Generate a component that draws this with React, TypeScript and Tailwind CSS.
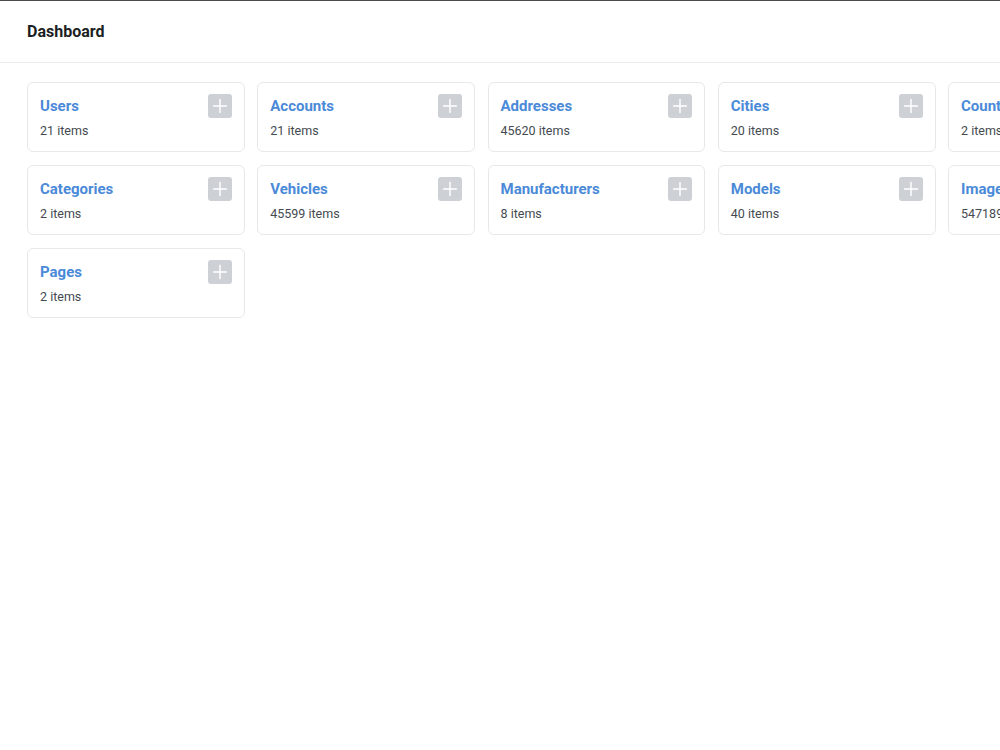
import { Plus } from "lucide-react";

type Entity = { name: string; count: number };

const entities: Entity[] = [
  { name: "Users", count: 21 },
  { name: "Accounts", count: 21 },
  { name: "Addresses", count: 45620 },
  { name: "Cities", count: 20 },
  { name: "Countries", count: 2 },
  { name: "Categories", count: 2 },
  { name: "Vehicles", count: 45599 },
  { name: "Manufacturers", count: 8 },
  { name: "Models", count: 40 },
  { name: "Images", count: 547189 },
  { name: "Pages", count: 2 },
];

const EntityCard = ({ entity }: { entity: Entity }) => (
  <div className="h-[70px] rounded-md border border-[#e6e8eb] bg-white pl-[12px] pr-[12px] pt-[11px] flex justify-between">
    <div className="mt-px flex flex-col">
      <a className="text-[15px] leading-[23px] font-bold text-[#4a8ad8] cursor-pointer">
        {entity.name}
      </a>
      <span className="mt-[4px] text-[12.5px] leading-[18px] text-[#444a50]">
        {entity.count} items
      </span>
    </div>
    <button
      type="button"
      className="w-6 h-6 rounded-[3px] bg-[#cdd1d5] flex items-center justify-center"
    >
      <Plus className="text-white" size={22} strokeWidth={1.6} />
    </button>
  </div>
);

export default function App() {
  return (
    <div
      className="w-full min-h-[750px] bg-white border-t border-[#4b4b4b] overflow-hidden"
      style={{ fontFamily: 'Roboto, "Noto Sans", sans-serif' }}
    >
      <header className="h-[62px] border-b border-[#e9ebed] flex items-center px-[27px]">
        <h1 className="text-[16px] font-bold text-[#1c1f23]">Dashboard</h1>
      </header>
      <main className="px-[27px] pt-[19px]">
        <div className="grid grid-cols-[repeat(5,217.75px)] gap-x-[12.5px] gap-y-[13px] w-max">
          {entities.map((e) => (
            <EntityCard key={e.name} entity={e} />
          ))}
        </div>
      </main>
    </div>
  );
}
